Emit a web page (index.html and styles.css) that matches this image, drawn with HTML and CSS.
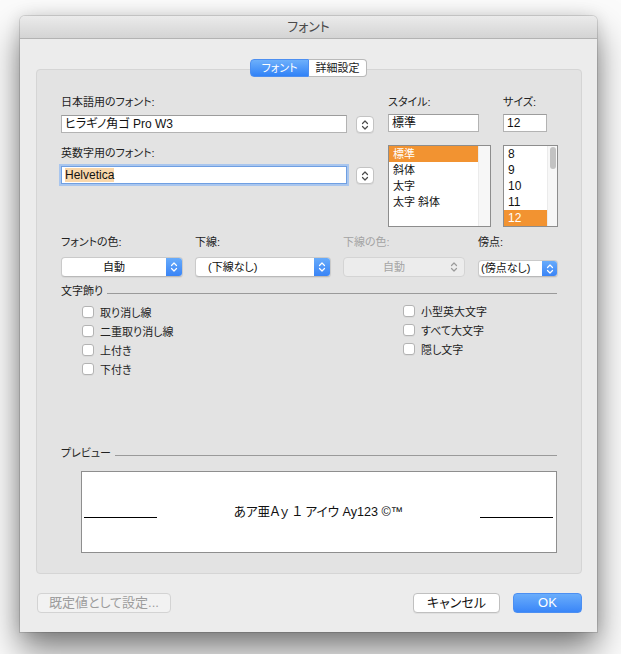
FILE: index.html
```html
<!DOCTYPE html>
<html lang="ja">
<head>
<meta charset="utf-8">
<title>フォント</title>
<link rel="stylesheet" href="styles.css">
</head>
<body>
<div class="window">
  <div class="titlebar">フォント</div>
  <div class="content">
    <div class="tabs">
      <span class="tab active">フォント</span><span class="tab">詳細設定</span>
    </div>
    <div class="panel">
      <div class="top">
        <div class="col-font">
          <div class="label">日本語用のフォント:</div>
          <div class="field-row">
            <div class="field wide">ヒラギノ角ゴ Pro W3</div>
            <div class="stepper"><svg width="8" height="12" viewBox="0 0 8 12"><path d="M1.5 4.5 L4 2 L6.5 4.5 M1.5 7.5 L4 10 L6.5 7.5" fill="none" stroke="#4a4a4a" stroke-width="1.2" stroke-linecap="round" stroke-linejoin="round"/></svg></div>
          </div>
          <div class="label gap">英数字用のフォント:</div>
          <div class="field-row">
            <div class="field wide focus"><span class="sel">Helvetica</span></div>
            <div class="stepper"><svg width="8" height="12" viewBox="0 0 8 12"><path d="M1.5 4.5 L4 2 L6.5 4.5 M1.5 7.5 L4 10 L6.5 7.5" fill="none" stroke="#4a4a4a" stroke-width="1.2" stroke-linecap="round" stroke-linejoin="round"/></svg></div>
          </div>
        </div>
        <div class="col-style">
          <div class="label">スタイル:</div>
          <div class="field style-field">標準</div>
          <div class="list style-list">
            <div class="rows">
              <div class="row selected">標準</div>
              <div class="row">斜体</div>
              <div class="row">太字</div>
              <div class="row">太字 斜体</div>
            </div>
            <div class="track"></div>
          </div>
        </div>
        <div class="col-size">
          <div class="label">サイズ:</div>
          <div class="field size-field">12</div>
          <div class="list size-list">
            <div class="rows">
              <div class="row">8</div>
              <div class="row">9</div>
              <div class="row">10</div>
              <div class="row">11</div>
              <div class="row selected">12</div>
            </div>
            <div class="track"><div class="thumb"></div></div>
          </div>
        </div>
      </div>

      <div class="popups">
        <div class="pop-col c1">
          <div class="label">フォントの色:</div>
          <div class="popup"><span class="pop-text center">自動</span><span class="pop-arrows"><svg width="8" height="12" viewBox="0 0 8 12"><path d="M1.5 4.5 L4 2 L6.5 4.5 M1.5 7.5 L4 10 L6.5 7.5" fill="none" stroke="#fff" stroke-width="1.2" stroke-linecap="round" stroke-linejoin="round"/></svg></span></div>
        </div>
        <div class="pop-col c2">
          <div class="label">下線:</div>
          <div class="popup"><span class="pop-text left">(下線なし)</span><span class="pop-arrows"><svg width="8" height="12" viewBox="0 0 8 12"><path d="M1.5 4.5 L4 2 L6.5 4.5 M1.5 7.5 L4 10 L6.5 7.5" fill="none" stroke="#fff" stroke-width="1.2" stroke-linecap="round" stroke-linejoin="round"/></svg></span></div>
        </div>
        <div class="pop-col c3">
          <div class="label disabled">下線の色:</div>
          <div class="popup off"><span class="pop-text center">自動</span><span class="pop-arrows plain"><svg width="8" height="12" viewBox="0 0 8 12"><path d="M1.5 4.5 L4 2 L6.5 4.5 M1.5 7.5 L4 10 L6.5 7.5" fill="none" stroke="#9a9a9a" stroke-width="1.2" stroke-linecap="round" stroke-linejoin="round"/></svg></span></div>
        </div>
        <div class="pop-col c4">
          <div class="label">傍点:</div>
          <div class="popup small"><span class="pop-text tight">(傍点なし)</span><span class="pop-arrows"><svg width="8" height="12" viewBox="0 0 8 12"><path d="M1.5 4.5 L4 2 L6.5 4.5 M1.5 7.5 L4 10 L6.5 7.5" fill="none" stroke="#fff" stroke-width="1.2" stroke-linecap="round" stroke-linejoin="round"/></svg></span></div>
        </div>
      </div>

      <div class="section-head deco"><span class="sh-label">文字飾り</span><span class="rule"></span></div>
      <div class="checks">
        <div class="check-col left">
          <div class="check-row"><span class="box"></span>取り消し線</div>
          <div class="check-row"><span class="box"></span>二重取り消し線</div>
          <div class="check-row"><span class="box"></span>上付き</div>
          <div class="check-row"><span class="box"></span>下付き</div>
        </div>
        <div class="check-col right">
          <div class="check-row"><span class="box"></span>小型英大文字</div>
          <div class="check-row"><span class="box"></span>すべて大文字</div>
          <div class="check-row"><span class="box"></span>隠し文字</div>
        </div>
      </div>

      <div class="preview-section">
        <div class="section-head"><span class="sh-label">プレビュー</span><span class="rule"></span></div>
        <div class="preview">
          <span class="pline"></span>
          <span class="ptext">あア亜Ａｙ １ アイウ Ay123 ©™</span>
          <span class="pline"></span>
        </div>
      </div>
    </div>

    <div class="buttons">
      <div class="btn default-btn">既定値として設定...</div>
      <div class="btn cancel">キャンセル</div>
      <div class="btn ok">OK</div>
    </div>
  </div>
</div>
</body>
</html>
```
FILE: styles.css
```css
html, body {
  margin: 0;
  padding: 0;
}
body {
  width: 621px;
  height: 654px;
  overflow: hidden;
  background: #fbfbfb;
  font-family: "Liberation Sans", "Noto Sans CJK JP", sans-serif;
  font-feature-settings: "palt";
  color: #222;
}
.window {
  margin: 16px 0 0 20px;
  width: 577px;
  height: 616px;
  background: #ececec;
  border-radius: 5px 5px 0 0;
  box-shadow: 0 0 0 1px rgba(0,0,0,0.12), 0 18px 34px rgba(0,0,0,0.5), 0 0 16px rgba(0,0,0,0.12);
  display: flex;
  flex-direction: column;
}
.titlebar {
  height: 22px;
  border-bottom: 1px solid #b3b3b3;
  background: linear-gradient(#ebebeb, #d4d4d4);
  border-radius: 5px 5px 0 0;
  text-align: center;
  font-size: 13px;
  line-height: 22px;
  color: #4a4a4a;
}
.content {
  padding-top: 20px;
  display: flex;
  flex-direction: column;
}
.tabs {
  display: flex;
  justify-content: center;
  height: 18px;
  margin-bottom: -8px;
  position: relative;
  z-index: 1;
}
.tab {
  box-sizing: border-box;
  height: 18px;
  width: 58px;
  font-size: 11px;
  line-height: 16px;
  text-align: center;
  background: #fff;
  border: 1px solid #b9b9b9;
  border-left: none;
  border-radius: 0 4px 4px 0;
  color: #1a1a1a;
}
.tab.active {
  width: 59px;
  background: linear-gradient(#6db0fb, #3182f7);
  border: 1px solid #4d8ff0;
  border-radius: 4px 0 0 4px;
  color: #fff;
}
.panel {
  margin: 0 15px 0 16px;
  height: 505px;
  box-sizing: border-box;
  background: #e3e3e3;
  border: 1px solid #d5d5d5;
  border-radius: 4px;
  padding: 25px 24px 20px 24px;
  display: flex;
  flex-direction: column;
}
.label {
  font-size: 11px;
  line-height: 14px;
  height: 14px;
  color: #222;
  white-space: nowrap;
}
.label.gap {
  margin-top: 13px;
}
.label.disabled {
  color: #a3a3a3;
}
.top {
  display: flex;
}
.col-font {
  width: 313px;
  flex-shrink: 0;
}
.col-style {
  width: 103px;
  margin-left: 14px;
  flex-shrink: 0;
}
.col-size {
  width: 55px;
  margin-left: 12px;
  flex-shrink: 0;
}
.field-row {
  display: flex;
  align-items: center;
  margin-top: 5px;
}
.field {
  box-sizing: border-box;
  height: 18px;
  background: #fff;
  border: 1px solid #b3b3b3;
  border-top-color: #9c9c9c;
  font-size: 12px;
  line-height: 16px;
  padding: 0 3px;
  color: #111;
  white-space: nowrap;
}
.field.wide {
  width: 286px;
}
.field.focus {
  border-color: #6f9fe2;
  box-shadow: 0 0 0 2px #a9c6ee;
}
.sel {
  background: #f9d7ab;
}
.style-field {
  width: 91px;
  margin-top: 5px;
}
.size-field {
  width: 44px;
  margin-top: 5px;
}
.stepper {
  box-sizing: border-box;
  width: 18px;
  height: 17px;
  margin-left: 9px;
  margin-top: 2px;
  background: #fff;
  border: 1px solid #c3c3c3;
  border-radius: 4px;
  box-shadow: 0 1px 0 rgba(0,0,0,0.05);
  display: flex;
  align-items: center;
  justify-content: center;
}
.list {
  box-sizing: border-box;
  height: 82px;
  margin-top: 13px;
  border: 1px solid #8d8d8d;
  background: #fff;
  display: flex;
}
.rows {
  flex: 1;
}
.row {
  height: 16px;
  line-height: 16px;
  font-size: 11px;
  padding-left: 4px;
  color: #111;
  white-space: nowrap;
}
.size-list .row {
  font-size: 12px;
}
.row.selected {
  background: #f29331;
  color: #fff;
}
.style-list .track {
  width: 11px;
  background: #f7f7f7;
  border-left: 1px solid #ebebeb;
}
.size-list .track {
  width: 10px;
  background: #f7f7f7;
  border-left: 1px solid #ebebeb;
  padding: 1px 0 0 2px;
  box-sizing: border-box;
}
.thumb {
  width: 6px;
  height: 22px;
  border-radius: 3px;
  background: #c2c2c2;
}
.popups {
  display: flex;
  margin-top: 8px;
}
.pop-col {
  flex-shrink: 0;
}
.pop-col.c1 { width: 122px; }
.pop-col.c2 { width: 136px; margin-left: 12px; }
.pop-col.c3 { width: 122px; margin-left: 12px; }
.pop-col.c4 { width: 80px; margin-left: 13px; }
.popup {
  box-sizing: border-box;
  height: 20px;
  margin-top: 8px;
  display: flex;
  background: #fff;
  border: 1px solid #cacaca;
  border-bottom-color: #b9b9b9;
  border-radius: 4px;
  box-shadow: 0 1px 1px rgba(0,0,0,0.06);
  overflow: hidden;
}
.popup.small {
  height: 17px;
  margin-top: 11px;
}
.popup.off {
  background: #ececec;
  border-color: #d4d4d4;
  box-shadow: none;
}
.pop-text {
  flex: 1;
  font-size: 11px;
  line-height: 18px;
  color: #111;
  white-space: nowrap;
}
.popup.small .pop-text {
  line-height: 15px;
}
.popup.off .pop-text {
  color: #a5a5a5;
}
.pop-text.center {
  text-align: center;
}
.pop-text.left {
  padding-left: 12px;
}
.pop-text.tight {
  padding-left: 2px;
}
.pop-arrows {
  width: 16px;
  background: linear-gradient(#67abfb, #3a84f6);
  display: flex;
  align-items: center;
  justify-content: center;
}
.popup.small .pop-arrows {
  width: 15px;
}
.pop-arrows.plain {
  background: none;
  width: 20px;
}
.section-head {
  display: flex;
  align-items: center;
}
.section-head.deco {
  margin-top: 7px;
}
.sh-label {
  font-size: 11px;
  line-height: 14px;
  color: #222;
  white-space: nowrap;
}
.rule {
  flex: 1;
  height: 0;
  border-top: 1px solid #9a9a9a;
  margin: 4px 0 0 4px;
}
.checks {
  display: flex;
  margin-top: 4px;
}
.check-col.left {
  width: 321px;
  padding-left: 21px;
  flex-shrink: 0;
}
.check-row {
  display: flex;
  align-items: center;
  height: 19px;
  font-size: 11px;
  color: #222;
  white-space: nowrap;
}
.check-col.right .check-row {
  height: 18.7px;
}
.box {
  box-sizing: border-box;
  width: 12px;
  height: 12px;
  margin-right: 6px;
  background: #fff;
  border: 1px solid #b3b3b3;
  border-radius: 3px;
  box-shadow: 0 1px 0 rgba(0,0,0,0.04);
}
.preview-section {
  margin-top: auto;
}
.preview {
  box-sizing: border-box;
  margin: 11px 0 0 20px;
  width: 476px;
  height: 82px;
  background: #fff;
  border: 1px solid #8e8e8e;
  display: flex;
  align-items: center;
  justify-content: space-between;
  padding: 0 3px 0 2px;
}
.pline {
  width: 73px;
  height: 0;
  border-top: 1px solid #000;
  margin-top: 11px;
}
.ptext {
  font-size: 12.6px;
  line-height: 16px;
  color: #111;
  white-space: nowrap;
}
.buttons {
  display: flex;
  margin: 19px 15px 0 17px;
}
.btn {
  box-sizing: border-box;
  height: 20px;
  font-size: 13px;
  line-height: 18px;
  text-align: center;
  border-radius: 4px;
  white-space: nowrap;
}
.default-btn {
  width: 134px;
  background: #f2f2f2;
  border: 1px solid #d3d3d3;
  color: #9d9d9d;
}
.cancel {
  width: 87px;
  margin-left: auto;
  background: #fff;
  border: 1px solid #c0c0c0;
  box-shadow: 0 1px 0 rgba(0,0,0,0.05);
  color: #111;
}
.ok {
  width: 69px;
  margin-left: 13px;
  background: linear-gradient(#6aadfb, #3a86f8);
  border: 1px solid #4c8ff2;
  color: #fff;
}
```
